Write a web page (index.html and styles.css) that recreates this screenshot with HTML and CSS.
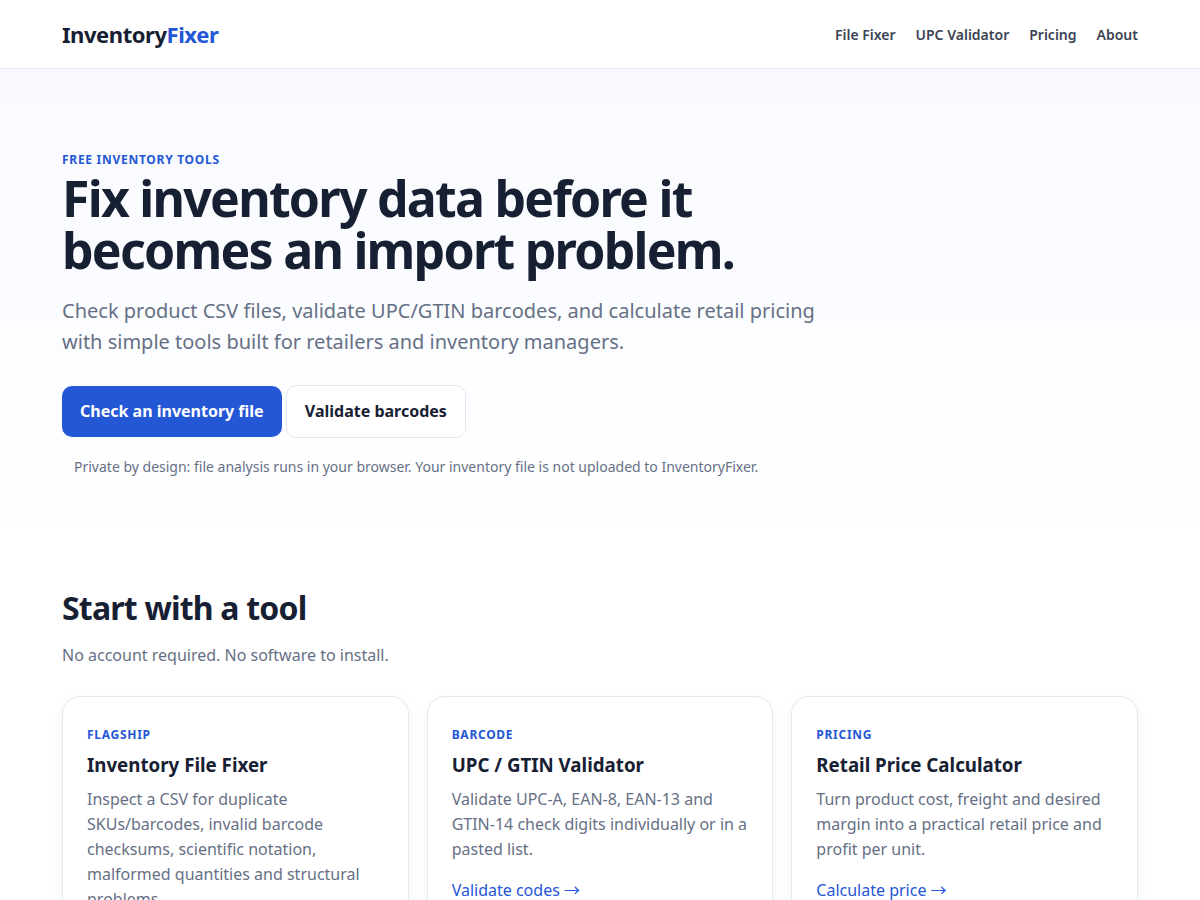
FILE: index.html
```html
<!DOCTYPE html>
<html lang="en">
<head>
    <meta charset="utf-8">
    <meta name="viewport" content="width=device-width, initial-scale=1">
    <title>InventoryFixer</title>
    <link rel="stylesheet" href="styles.css">
</head>
<body>
    <header class="site-header">
        <div class="container nav">
            <a class="brand" href="#">Inventory<span>Fixer</span></a>
            <nav class="nav-links">
                <a href="#">File Fixer</a>
                <a href="#">UPC Validator</a>
                <a href="#">Pricing</a>
                <a href="#">About</a>
            </nav>
        </div>
    </header>
    <main>
        <section class="hero">
            <div class="container">
                <span class="eyebrow">Free inventory tools</span>
                <h1>Fix inventory data before it becomes an import problem.</h1>
                <p class="lead">Check product CSV files, validate UPC/GTIN barcodes, and calculate retail pricing with simple tools built for retailers and inventory managers.</p>
                <div class="actions">
                    <a class="btn btn-primary" href="#">Check an inventory file</a>
                    <a class="btn btn-secondary" href="#">Validate barcodes</a>
                </div>
                <p class="notice">Private by design: file analysis runs in your browser. Your inventory file is not uploaded to InventoryFixer.</p>
            </div>
        </section>
        <section class="section">
            <div class="container">
                <h2>Start with a tool</h2>
                <p class="section-intro">No account required. No software to install.</p>
                <div class="grid">
                    <article class="card">
                        <span class="eyebrow">Flagship</span>
                        <h3>Inventory File Fixer</h3>
                        <p>Inspect a CSV for duplicate SKUs/barcodes, invalid barcode checksums, scientific notation, malformed quantities and structural problems.</p>
                        <a href="#">Open File Fixer →</a>
                    </article>
                    <article class="card">
                        <span class="eyebrow">Barcode</span>
                        <h3>UPC / GTIN Validator</h3>
                        <p>Validate UPC-A, EAN-8, EAN-13 and GTIN-14 check digits individually or in a pasted list.</p>
                        <a href="#">Validate codes →</a>
                    </article>
                    <article class="card">
                        <span class="eyebrow">Pricing</span>
                        <h3>Retail Price Calculator</h3>
                        <p>Turn product cost, freight and desired margin into a practical retail price and profit per unit.</p>
                        <a href="#">Calculate price →</a>
                    </article>
                </div>
            </div>
        </section>
    </main>
</body>
</html>
```
FILE: styles.css
```css
* { box-sizing: border-box; }
body {
    margin: 0;
    font-family: "Noto Sans", "Noto Sans CJK SC", sans-serif;
    font-size: 16px;
    line-height: 25px;
    color: #172033;
    background: #fff;
}
a { color: #2457d6; text-decoration: none; }
.container { width: min(1120px, 100%); margin: 0 auto; padding: 0 22px; }

.site-header { background: #fff; border-bottom: 1px solid #e4e8ef; }
.nav { min-height: 68px; display: flex; align-items: center; justify-content: space-between; }
.brand { font-size: 22px; font-weight: 700; letter-spacing: -0.02em; color: #172033; }
.brand span { color: #2457d6; }
.nav-links { display: flex; gap: 20px; }
.nav-links a { font-size: 14px; font-weight: 600; color: #3b4252; }

.hero { padding: 77px 0 61px; background: linear-gradient(#f8faff, #fff); }
.eyebrow {
    font-size: 12px;
    font-weight: 700;
    letter-spacing: 0.06em;
    text-transform: uppercase;
    color: #2457d6;
}
h1 {
    max-width: 780px;
    margin: 0 0 19px;
    font-size: 50px;
    line-height: 52px;
    letter-spacing: -0.035em;
}
.lead { max-width: 760px; margin: 0 0 28px; font-size: 20px; line-height: 31px; color: #667085; }
.btn {
    display: inline-block;
    padding: 13px 18px;
    border-radius: 10px;
    font-weight: 700;
}
.btn-primary { background: #2457d6; color: #fff; }
.btn-secondary { border: 1px solid #e4e8ef; background: #fff; color: #172033; }
.notice { margin: 16px 0 0; padding: 0 12px; font-size: 14px; color: #667085; }

.section { padding: 48px 0; }
h2 { margin: 0 0 15px; font-size: 32px; line-height: 40px; letter-spacing: -0.025em; }
.section-intro { margin: 0 0 28px; color: #667085; }
.grid { display: grid; grid-template-columns: repeat(3, 1fr); gap: 18px; }
.card {
    padding: 24px;
    border: 1px solid #e4e8ef;
    border-radius: 18px;
    background: #fff;
    box-shadow: 0 4px 16px rgba(23, 32, 51, 0.04);
}
.card h3 { margin: 5px 0 9px; line-height: 26px; }
.card p { margin: 0 0 16px; color: #667085; }

@media (max-width: 800px) {
    .grid { grid-template-columns: 1fr; }
    h1 { font-size: 40px; line-height: 44px; }
    .nav { flex-wrap: wrap; }
}
```
